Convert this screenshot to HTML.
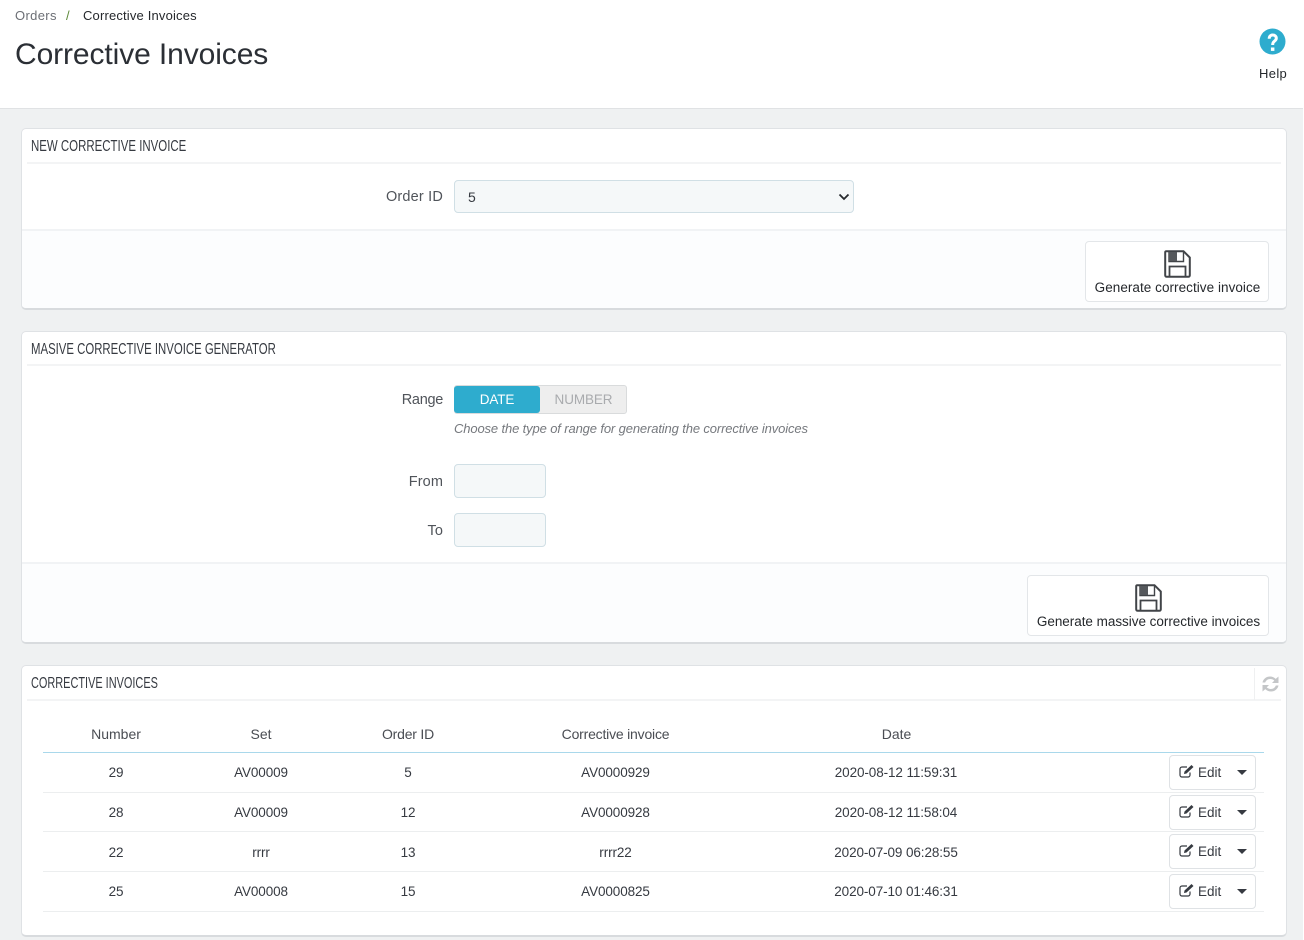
<!DOCTYPE html>
<html><head><meta charset="utf-8"><title>Corrective Invoices</title>
<style>
*{box-sizing:border-box}
html,body{margin:0;padding:0}
body{width:1304px;height:940px;overflow:hidden;position:relative;background:#eff1f2;font-family:"Liberation Sans",sans-serif;font-size:13.5px;color:#363a41}
.a,.t,.c,.r{position:absolute;white-space:nowrap}
.t,.c,.r{line-height:20px;height:20px}
.c{transform:translateX(-50%);text-align:center;letter-spacing:-.1px}
.r{text-align:right}
.th{font-size:14px;color:#4a4d53;letter-spacing:0}
.panel{position:absolute;left:21px;width:1266px;background:#fff;border:1px solid #dfe2e5;border-bottom:2px solid #d8dbde;border-radius:5px;overflow:hidden}
.line{position:absolute;height:2px;background:#f3f4f5}
.foot{position:absolute;left:0;right:0;bottom:0;background:#fcfdfe;border-top:2px solid #f1f3f5}
.h{position:absolute;left:31px;font-size:16px;line-height:20px;color:#363a41;transform-origin:left;white-space:nowrap}
.btn{position:absolute;background:#fff;border:1px solid #e3e6e9;border-radius:4px}
.inp{position:absolute;background:#f5f8f9;border:1px solid #d0dfe5;border-radius:4px}
.hr{position:absolute;left:43px;width:1221px;height:1px;background:#eceeef}
.edit{position:absolute;left:1169px;width:87px;height:35px;background:#fff;border:1px solid #dfe2e5;border-radius:4px}
.edit svg{position:absolute;left:9px;top:8px}
.edit span{position:absolute;left:28px;top:7px;line-height:20px;font-size:13.5px}
.edit i{position:absolute;left:67px;top:14px;border:5px solid transparent;border-top:5px solid #363a41;border-bottom:0}
.lb{right:861px;font-size:14.5px;color:#50545a}
</style></head><body>

<div class="a" style="left:0;top:0;width:1304px;height:109px;background:#fff;border-bottom:1px solid #e0e2e4"></div>
<div class="a" style="left:1303px;top:0;width:1px;height:940px;background:#fff"></div>

<div class="t" style="left:15px;top:6px;font-size:13px;color:#6c6f75;letter-spacing:.35px">Orders</div>
<div class="t" style="left:66px;top:6px;font-size:13px;color:#5d8a3a">/</div>
<div class="t" style="left:83px;top:6px;font-size:13px;color:#25282c;letter-spacing:.17px">Corrective Invoices</div>
<div class="t" style="left:15px;top:35px;height:40px;line-height:40px;font-size:30px;color:#2b2f35;letter-spacing:-.1px">Corrective Invoices</div>

<svg class="a" style="left:1259px;top:28px" width="27" height="27" viewBox="0 0 27 27"><circle cx="13.5" cy="13.500" r="13" fill="#2eacce"/><path d="M10.200 10.800c0-2.600 1.500-3.800 3.500-3.800s3.600 1.200 3.600 3.200c0 2.900-3.600 2.700-3.600 6.200v.6" fill="none" stroke="#fff" stroke-width="3"/><rect x="11.900" y="19.500" width="3.500" height="3.400" fill="#fff"/></svg>
<div class="t" style="left:1259px;top:64px;font-size:13px;color:#25282c;letter-spacing:.35px">Help</div>

<!-- Panel 1 -->
<div class="panel" style="top:128px;height:182px"><div class="foot" style="height:79px"></div></div>
<div class="line" style="left:27px;top:162px;width:1254px"></div>
<div class="h" style="top:137px;transform:scaleX(.716)">NEW CORRECTIVE INVOICE</div>
<div class="r lb" style="top:187px;letter-spacing:.18px">Order ID</div>
<div class="inp" style="left:454px;top:180px;width:400px;height:33px"></div>
<div class="t" style="left:468px;top:187px;font-size:14px;color:#363a41">5</div>
<svg class="a" style="left:838px;top:192px" width="12" height="9" viewBox="0 0 12 9"><path d="M1.500 2.500l4.500 4.500 4.500-4.500" fill="none" stroke="#26292d" stroke-width="1.800"/></svg>

<div class="btn" style="left:1085px;top:241px;width:184px;height:61px"></div>
<svg class="a" style="left:1164px;top:250px" width="27" height="28" viewBox="0 0 27 28"><path d="M2.200 1.200H19.500L25.800 7.500V25.400a1.400 1.400 0 0 1-1.400 1.400H2.600A1.400 1.400 0 0 1 1.200 25.400V2.200a1 1 0 0 1 1-1z" fill="none" stroke="#414448" stroke-width="2"/><path d="M5 2v9.500h14.500V2" fill="none" stroke="#414448" stroke-width="1.400"/><rect x="5" y="2" width="8" height="9" fill="#55585c"/><path d="M5.500 26.500V16.500h16V26.500" fill="none" stroke="#414448" stroke-width="1.800"/></svg>
<div class="c" style="left:1177.5px;top:278px;font-size:13.5px;color:#25282c;letter-spacing:.05px">Generate corrective invoice</div>

<!-- Panel 2 -->
<div class="panel" style="top:331px;height:313px"><div class="foot" style="height:80px"></div></div>
<div class="line" style="left:27px;top:364px;width:1254px"></div>
<div class="h" style="top:340px;transform:scaleX(.711)">MASIVE CORRECTIVE INVOICE GENERATOR</div>
<div class="r lb" style="top:390px;letter-spacing:-.3px">Range</div>
<div class="a" style="left:454px;top:385px;width:173px;height:29px;background:#eeeeee;border:1px solid #d9dbdc;border-radius:3px"></div>
<div class="a" style="left:454px;top:386px;width:86px;height:27px;background:#2eacce;border-radius:3px"></div>
<div class="c" style="left:497px;top:390px;font-size:13.5px;color:#fff">DATE</div>
<div class="c" style="left:583.5px;top:390px;font-size:13.5px;color:#a9abae">NUMBER</div>
<div class="t" style="left:454px;top:419px;font-size:13px;font-style:italic;color:#76797e;letter-spacing:-.13px">Choose the type of range for generating the corrective invoices</div>
<div class="r lb" style="top:472px;letter-spacing:.1px">From</div>
<div class="inp" style="left:454px;top:464px;width:92px;height:34px"></div>
<div class="r lb" style="top:521px;letter-spacing:.1px">To</div>
<div class="inp" style="left:454px;top:513px;width:92px;height:34px"></div>

<div class="btn" style="left:1027px;top:575px;width:242px;height:61px"></div>
<svg class="a" style="left:1135px;top:584px" width="27" height="28" viewBox="0 0 27 28"><path d="M2.200 1.200H19.500L25.800 7.500V25.400a1.400 1.400 0 0 1-1.400 1.400H2.600A1.400 1.400 0 0 1 1.200 25.400V2.200a1 1 0 0 1 1-1z" fill="none" stroke="#414448" stroke-width="2"/><path d="M5 2v9.500h14.500V2" fill="none" stroke="#414448" stroke-width="1.400"/><rect x="5" y="2" width="8" height="9" fill="#55585c"/><path d="M5.500 26.500V16.500h16V26.500" fill="none" stroke="#414448" stroke-width="1.800"/></svg>
<div class="c" style="left:1148.5px;top:612px;font-size:13.5px;color:#25282c;letter-spacing:-.03px">Generate massive corrective invoices</div>

<!-- Panel 3 -->
<div class="panel" style="top:665px;height:272px"></div>
<div class="line" style="left:27px;top:699px;width:1254px"></div>
<div class="a" style="left:1254px;top:668px;width:1px;height:32px;background:#eff0f1"></div>
<div class="h" style="top:674px;transform:scaleX(.683)">CORRECTIVE INVOICES</div>
<svg class="a" style="left:1261px;top:675px" width="19" height="18" viewBox="0 0 19 18"><path d="M1.500 7.500C2.300 3.800 5.400 1.500 9 1.500c2.200 0 4.200.9 5.700 2.400L17.500 1.500v6.500H11l2.300-2.400C12.200 4.600 10.800 4 9.200 4 6.800 4 4.900 5.400 4.200 7.500z" fill="#c4c6c8"/><path d="M17.500 10.500C16.700 14.200 13.600 16.500 10 16.500c-2.200 0-4.200-.9-5.700-2.400L1.500 16.500V10H8L5.700 12.400C6.800 13.400 8.200 14 9.800 14c2.400 0 4.300-1.400 5-3.500z" fill="#c4c6c8"/></svg>

<div class="c th" style="left:116px;top:724px">Number</div>
<div class="c th" style="left:261px;top:724px">Set</div>
<div class="c th" style="left:408px;top:724px;letter-spacing:-.2px">Order ID</div>
<div class="c th" style="left:615.500px;top:724px;letter-spacing:-.2px">Corrective invoice</div>
<div class="c th" style="left:896.500px;top:724px">Date</div>
<div class="a" style="left:43px;top:752px;width:1221px;height:1px;background:#a9d8eb"></div>

<div class="c" style="left:116px;top:763px">29</div><div class="c" style="left:261px;top:763px">AV00009</div><div class="c" style="left:408px;top:763px">5</div><div class="c" style="left:615.500px;top:763px">AV0000929</div><div class="c" style="left:896px;top:763px">2020-08-12 11:59:31</div>
<div class="hr" style="top:792px"></div>
<div class="c" style="left:116px;top:803px">28</div><div class="c" style="left:261px;top:803px">AV00009</div><div class="c" style="left:408px;top:803px">12</div><div class="c" style="left:615.500px;top:803px">AV0000928</div><div class="c" style="left:896px;top:803px">2020-08-12 11:58:04</div>
<div class="hr" style="top:831px"></div>
<div class="c" style="left:116px;top:843px">22</div><div class="c" style="left:261px;top:843px">rrrr</div><div class="c" style="left:408px;top:843px">13</div><div class="c" style="left:615.500px;top:843px">rrrr22</div><div class="c" style="left:896px;top:843px">2020-07-09 06:28:55</div>
<div class="hr" style="top:871px"></div>
<div class="c" style="left:116px;top:882px">25</div><div class="c" style="left:261px;top:882px">AV00008</div><div class="c" style="left:408px;top:882px">15</div><div class="c" style="left:615.500px;top:882px">AV0000825</div><div class="c" style="left:896px;top:882px">2020-07-10 01:46:31</div>
<div class="hr" style="top:911px"></div>

<div class="edit" style="top:755px"><svg width="16" height="14" viewBox="0 0 16 14"><path d="M11 8.500v2.500a2 2 0 0 1-2 2H3a2 2 0 0 1-2-2V5a2 2 0 0 1 2-2h5" fill="none" stroke="#363a41" stroke-width="1.200"/><path d="M5.500 7.500L12.500 1l2 2L7.500 9.500l-2.500.5z" fill="#363a41"/></svg><span>Edit</span><i></i></div>
<div class="edit" style="top:795px"><svg width="16" height="14" viewBox="0 0 16 14"><path d="M11 8.500v2.500a2 2 0 0 1-2 2H3a2 2 0 0 1-2-2V5a2 2 0 0 1 2-2h5" fill="none" stroke="#363a41" stroke-width="1.200"/><path d="M5.500 7.500L12.500 1l2 2L7.500 9.500l-2.500.5z" fill="#363a41"/></svg><span>Edit</span><i></i></div>
<div class="edit" style="top:834px"><svg width="16" height="14" viewBox="0 0 16 14"><path d="M11 8.500v2.500a2 2 0 0 1-2 2H3a2 2 0 0 1-2-2V5a2 2 0 0 1 2-2h5" fill="none" stroke="#363a41" stroke-width="1.200"/><path d="M5.500 7.500L12.500 1l2 2L7.500 9.500l-2.500.5z" fill="#363a41"/></svg><span>Edit</span><i></i></div>
<div class="edit" style="top:874px"><svg width="16" height="14" viewBox="0 0 16 14"><path d="M11 8.500v2.500a2 2 0 0 1-2 2H3a2 2 0 0 1-2-2V5a2 2 0 0 1 2-2h5" fill="none" stroke="#363a41" stroke-width="1.200"/><path d="M5.500 7.500L12.500 1l2 2L7.500 9.500l-2.500.5z" fill="#363a41"/></svg><span>Edit</span><i></i></div>

</body></html>
